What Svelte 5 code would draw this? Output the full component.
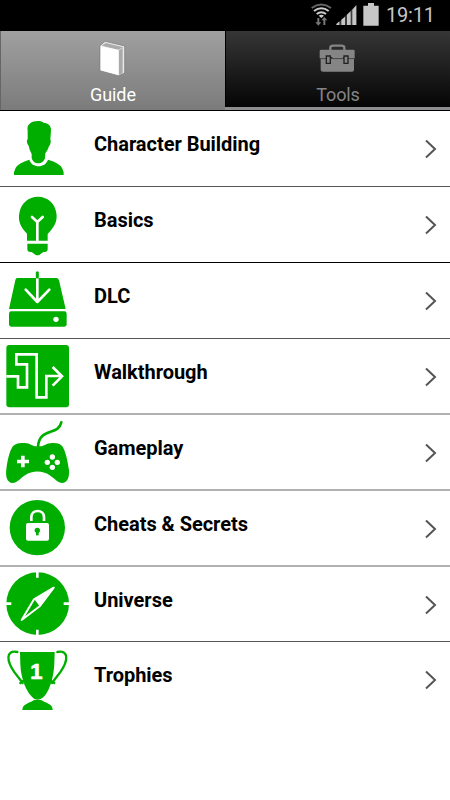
<script>
  let active = "Guide";

  const tabs = ["Guide", "Tools"];

  const items = [
    { title: "Character Building", icon: "person", line: "dark" },
    { title: "Basics", icon: "bulb", line: "black" },
    { title: "DLC", icon: "drive", line: "dark" },
    { title: "Walkthrough", icon: "maze", line: "soft" },
    { title: "Gameplay", icon: "gamepad", line: "soft" },
    { title: "Cheats & Secrets", icon: "lock", line: "soft" },
    { title: "Universe", icon: "compass", line: "dark short" },
    { title: "Trophies", icon: "trophy", line: "none" },
  ];
</script>

<div class="screen">
  <header class="status">
    <svg class="signals" width="72" height="31" viewBox="0 0 216 93">
      <g fill="none" stroke-width="6">
        <path d="M5 24Q34 3 63 24" stroke="#666" />
        <path d="M12 33Q34 17 56 33" stroke="#ccc" />
        <path d="M20 42Q34 31 48 42" stroke="#ccc" />
      </g>
      <path d="M26 47Q34 41 42 47L34 54Z" fill="#ccc" />
      <path d="M22 54h6v13h6l-9 10-9-10h6zM40 75h6V61h6l-9-10-9 10h6z" fill="#777" />
      <path d="M79 75v-3l9-8v11zM94 75V59l11-9v25zM111 75V44l11-10v41zM127 75V29l12-13v59z" fill="#c6c6c6" />
      <path d="M79 75L139 15v60z" fill="#c6c6c6" opacity="0.3" />
      <path d="M160 17h14v-8h18v8h14v60h-46z" fill="#c6c6c6" />
    </svg>
    <span class="clock">19:11</span>
  </header>

  <nav class="tabs">
    {#each tabs as tab}
      <button class="tab" class:active={tab === active} on:click={() => (active = tab)}>
        {#if tab === "Guide"}
          <svg width="32" height="40" viewBox="5 10 96 120">
            <path d="M14 27L29 14 88 28v81l-19 8-55-15z" fill="#e9e9e9" stroke="#777" stroke-width="2" />
            <path d="M19 27L31 19 84 32 69 39z" fill="#aaa" />
            <path d="M71 41L82 34v75l-11 5z" fill="#aaa" />
            <path d="M16 28l53 12v75l-53-14z" fill="#fff" />
          </svg>
        {:else}
          <svg width="40" height="40" viewBox="0 6 120 120">
            <path d="M37 37v-8q0-6 9-6h24q9 0 9 6v8" fill="none" stroke="#858585" stroke-width="7" />
            <path d="M10 35h96q4 0 4 4v22h-20v-4H75v4H43v-4H28v4H5V39q0-4 5-4z" fill="#858585" />
            <path d="M8 63h100v32q0 6-6 6H15q-7 0-7-6z" fill="#858585" />
            <path d="M6 62h104" stroke="#5a5a5a" stroke-width="2" />
            <path d="M25 54h12v22H25zM78 54h12v22H78z" fill="#858585" stroke="#222" stroke-width="4" />
          </svg>
        {/if}
        <span>{tab}</span>
      </button>
    {/each}
  </nav>

  <main>
    {#each items as item}
      <div class="row {item.line}">
        <svg class="icon" width="76" height="74" viewBox="0 0 228 222">
          {#if item.icon === "person"}
            <g transform="translate(0 3)">
              <path d="M83 55c-4-18 12-28 32-28 7 0 12 2 17 6 11 0 21 7 21 21l-2 29c3 2 1 14-4 20l-5 12-6 9-1 15c-4 10-11 15-19 15-12 0-19-7-21-16v-12l-6-13-3-12c-5-4-7-17-3-19z" />
              <path d="M42 189q-1-23 18-34 13-7 28-12c7 26 48 26 56 0q18 5 29 12 19 11 18 34z" />
            </g>
          {:else if item.icon === "bulb"}
            <g transform="translate(0 3)">
              <path d="M81 158v-21C60 115 54 98 58 75c5-30 28-49 56-49s51 19 55 49c4 23-4 40-26 63v20z" />
              <path d="M82 167h61v16q0 9-9 9h-4l-11 8q-6 3-13 0l-11-8h-4q-9 0-9-9z" />
              <path class="cut" d="M96 87l16 15 16-15M112 102v57" stroke-width="8" />
            </g>
          {:else if item.icon === "drive"}
            <g transform="translate(0 3)">
              <path d="M52 42h117q6 0 8 7l20 86H27l19-86q1-7 6-7z" />
              <rect x="27" y="142" width="173" height="46" rx="7" />
              <path class="cut" d="M112 44v70M77 77l35 37 36-37" stroke-width="8" />
              <path class="line" d="M112 26v13" stroke-width="9" />
              <circle class="white" cx="168" cy="166" r="8" />
            </g>
          {:else if item.icon === "maze"}
            <g transform="translate(0 3)">
              <rect x="19" y="15" width="188" height="187" rx="9" />
              <path class="cut square" d="M19 109h35v33h27V73H49V43h61v129h29v-64h47M158 81l28 28-28 28" stroke-width="8" />
            </g>
          {:else if item.icon === "gamepad"}
            <path d="M43 90c8-5 15-6 31-6 18 0 19 10 37 10h9c14 0 18-10 37-10 15 0 23 2 30 10 8 12 15 36 20 72 2 23-7 38-20 38-14 0-21-12-38-23-21-15-52-15-74 0-15 10-23 23-37 23-17 0-22-19-19-41 4-32 12-65 24-73z" />
            <path class="line" d="M114 96c3-60 61-32 70-74" stroke-width="8" />
            <path class="white" d="M63 122h11v12h13v11H74v12H63v-12H51v-11h12z" />
            <g class="white">
              <circle cx="157" cy="126" r="8" />
              <circle cx="157" cy="157" r="8" />
              <circle cx="142" cy="142" r="8" />
              <circle cx="172" cy="142" r="8" />
            </g>
          {:else if item.icon === "lock"}
            <circle cx="112" cy="110" r="83" />
            <path class="cut square" d="M94 90V78c0-24 38-24 38 0v12" stroke-width="8" />
            <rect class="white" x="78" y="96" width="69" height="53" rx="6" />
            <circle cx="112" cy="118" r="8" />
            <path d="M108 120h8v13h-8z" />
          {:else if item.icon === "compass"}
            <circle cx="113" cy="110" r="94" />
            <path class="cut square" d="M112 14v18M112 188v18M17 110h17M191 110h17" stroke-width="8" />
            <path class="white" d="M102 95L165 60 120 119z" />
            <path class="cut" d="M161 62L102 97 65 159l55-42z" stroke-width="6" />
          {:else}
            <path d="M60 30h104l-1 33c-2 52-20 99-41 108h-19c-24-18-40-58-42-104z" />
            <path d="M98 176q15-9 30 0c5 6 31 8 30 28H67c0-20 26-22 31-28z" />
            <path class="line" d="M52 30C14 23 22 60 42 89l26 34M61 123l9-6M172 30c38-7 30 30 10 59l-26 34M153 117l10 6" stroke-width="7" />
            <text x="109" y="111">1</text>
          {/if}
        </svg>
        <span class="title">{item.title}</span>
        <svg class="chevron" width="14" height="20" viewBox="0 0 14 20">
          <path d="M2 1.5l9 8.5-9 8.5" />
        </svg>
      </div>
    {/each}
  </main>
</div>

<style>
  :global(body) {
    background: #fff;
  }

  .screen {
    width: 450px;
    height: 800px;
    overflow: hidden;
    font-family: Roboto, sans-serif;
    background: #fff;
  }

  .status {
    display: flex;
    justify-content: flex-end;
    height: 31px;
    padding-right: 15px;
    background: #000;
  }

  .signals {
    margin-right: 4px;
  }

  .clock {
    color: #c6c6c6;
    font-size: 20px;
    letter-spacing: -0.2px;
    line-height: 31px;
    width: 49px;
    white-space: nowrap;
  }

  .tabs {
    display: flex;
    box-sizing: border-box;
    height: 80px;
    background: #8d8d8f;
    border-bottom: 1px solid #000;
  }

  .tab {
    display: flex;
    flex-direction: column;
    align-items: center;
    box-sizing: border-box;
    width: 225px;
    height: 76px;
    padding: 9px 0 0;
    border: 0;
    border-left: 1px solid #000;
    font-family: inherit;
    font-size: 18px;
    letter-spacing: -0.1px;
    color: #858585;
    background: linear-gradient(#363636, #050505);
  }

  .tab svg {
    flex: none;
  }

  .tab span {
    line-height: 22px;
    margin-top: 4px;
  }

  .tab.active {
    height: 79px;
    border-color: #666;
    color: #fff;
    background: linear-gradient(#a0a0a0, #7b7b7b);
  }

  .row {
    display: flex;
    align-items: flex-start;
    box-sizing: border-box;
    height: 76px;
    border-bottom: 1px solid #555;
  }

  .row.black {
    border-color: #000;
  }

  .row.soft {
    border-bottom: 2px solid #b2b2b2;
  }

  .row.short {
    height: 75px;
  }

  .row.none {
    border: 0;
  }

  .icon {
    flex: none;
    fill: #00ae00;
  }

  .line {
    fill: none;
    stroke: #00ae00;
    stroke-linecap: round;
  }

  .cut {
    fill: none;
    stroke: #fff;
    stroke-linecap: round;
    stroke-linejoin: round;
  }

  .square {
    stroke-linecap: butt;
    stroke-linejoin: miter;
  }

  .white {
    fill: #fff;
  }

  .icon text {
    fill: #fff;
    stroke: #fff;
    stroke-width: 2;
    font-size: 66px;
    font-weight: 700;
    font-family: "Liberation Sans", sans-serif;
    text-anchor: middle;
  }

  .title {
    flex: 1;
    margin-left: 18px;
    padding-top: 21px;
    line-height: 24px;
    font-size: 20px;
    font-weight: 700;
    letter-spacing: -0.03px;
    color: #000;
  }

  .chevron {
    margin: 27.5px 12px 0 0;
    fill: none;
    stroke: #555;
    stroke-width: 2;
  }
</style>
